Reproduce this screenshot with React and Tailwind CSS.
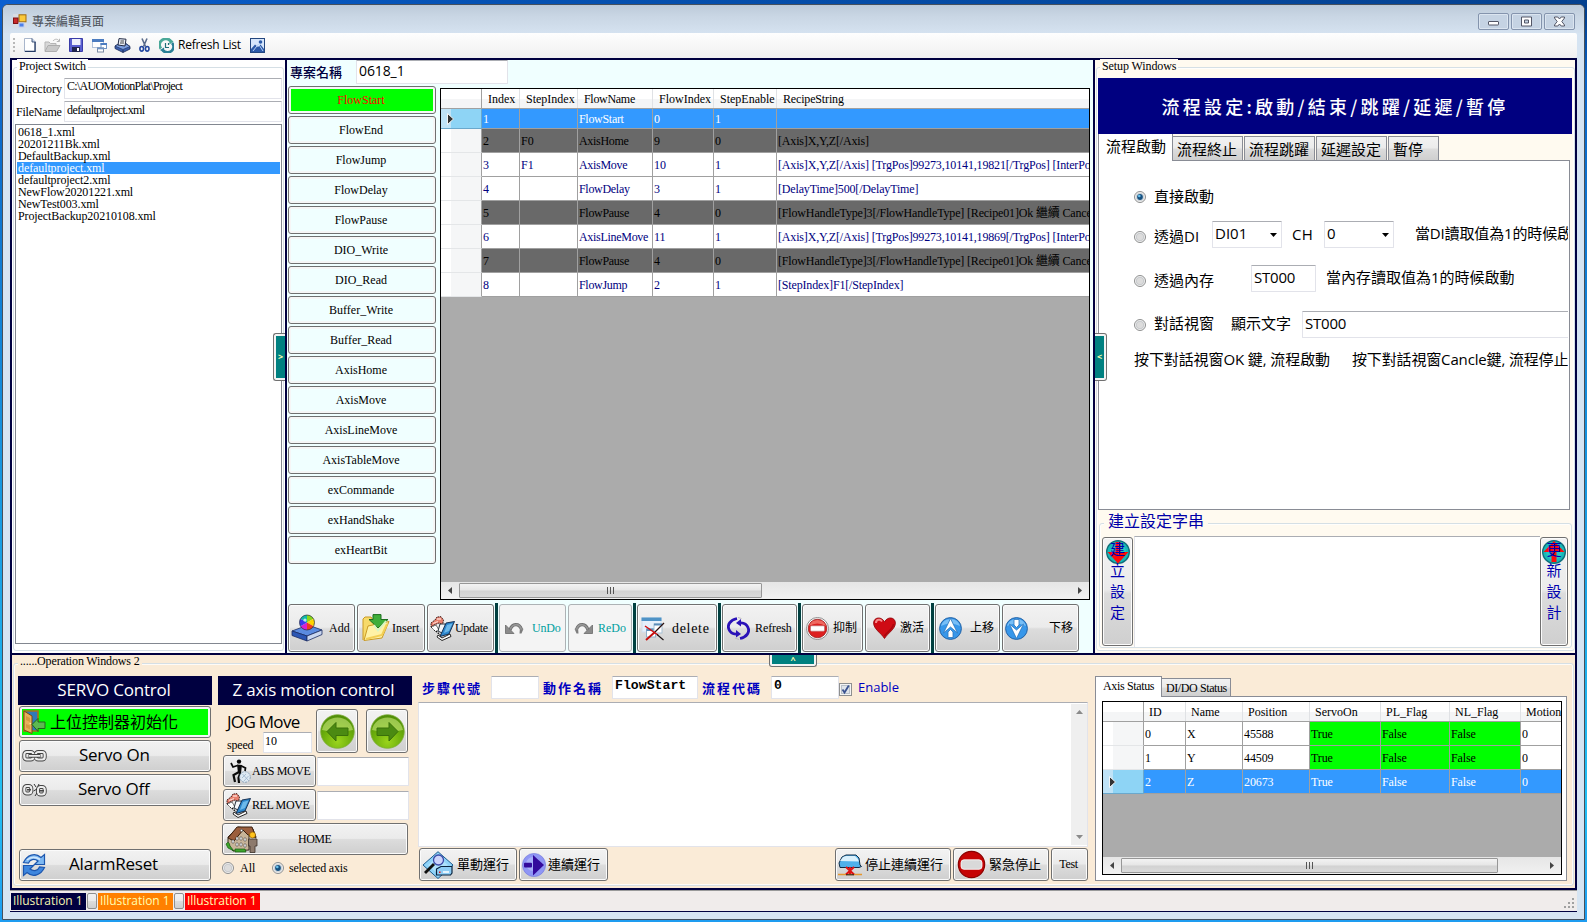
import React from "react";

const SERIF = "font-['Liberation_Serif','Noto_Sans_CJK_TC',serif]";
const SANS = "font-['Open_Sans','Noto_Sans_CJK_TC',sans-serif]";
const CJK = "font-['Noto_Sans_CJK_TC',sans-serif]";
const FACE =
  "bg-[linear-gradient(#f2f2f2,#ebebeb_48%,#dcdcdc_52%,#cfcfcf)] shadow-[inset_0_0_0_1px_#fbfbfb] border border-[#707070] rounded-[3px]";
const FIELD =
  "bg-white border border-[#e2e3ea] border-t-[#abadb3] rounded-[1px] box-border";

/* ---------- icons ---------- */
const Svg = ({ s = 24, w, h, vb = "0 0 24 24", className = "", children }) => (
  <svg width={w || s} height={h || s} viewBox={vb} className={"shrink-0 block " + className}>
    {children}
  </svg>
);

const AppIcon = () => (
  <Svg s={14} vb="0 0 14 14">
    <rect x="0" y="0" width="14" height="14" fill="#d8dbe2" />
    <rect x="6" y="0.8" width="7" height="7" fill="#fbc93a" stroke="#9c6a10" />
    <rect x="0.5" y="4" width="4.500" height="5.500" fill="#c8282a" stroke="#7d1213" />
    <rect x="6" y="9" width="5" height="4" fill="#4d7fe8" stroke="#bdd0f5" />
  </Svg>
);
const NewIcon = () => (
  <Svg w={12} h={14} vb="0 0 12 14">
    <path d="M.5 .5H8L11.500 4V13.500H.5Z" fill="#fff" stroke="#a9b6cb" />
    <path d="M11 4V13.500H1" fill="none" stroke="#243a63" strokeWidth="1.300" />
    <path d="M8 .5V4H11.500" fill="#c7d5ea" stroke="#243a63" strokeWidth=".8" />
  </Svg>
);
const OpenIcon = () => (
  <Svg w={17} h={15} vb="0 0 17 15">
    <path d="M1 13V4H5L6.500 5.500H12V8" fill="#d8d8d8" stroke="#b5b5b5" />
    <path d="M1 13.500L4 7.500H16L12.500 13.500Z" fill="#c9c9c9" stroke="#adadad" />
    <path d="M9 3C11 .5 14 .8 15 3M15.500 .8V3.500H12.800" fill="none" stroke="#b5b5b5" />
  </Svg>
);
const SaveIcon = () => (
  <Svg s={14} vb="0 0 14 14">
    <path d="M.5 .5H13.500V13.500H.5Z" fill="#5a5fd0" stroke="#3a3ca8" />
    <rect x="3" y="1" width="8.500" height="6" fill="#eef0fb" />
    <rect x="3" y="9" width="8" height="5" fill="#20244f" />
    <rect x="8" y="10" width="2" height="3" fill="#fff" />
  </Svg>
);
const WindowsIcon = () => (
  <Svg s={15} vb="0 0 15 15">
    <rect x=".5" y="1.500" width="11" height="8" fill="#fff" stroke="#b3c3da" />
    <rect x="0" y="1" width="12" height="3" fill="#4c7cc0" />
    <rect x="9" y="5.500" width="5.500" height="5" fill="#fff" stroke="#6f93c4" />
    <rect x="8.500" y="5" width="6.500" height="2" fill="#4c7cc0" />
    <rect x="5.500" y="10" width="6" height="4" fill="#fff" stroke="#7b8aa3" />
    <rect x="5" y="9.500" width="7" height="1.800" fill="#6f93c4" />
  </Svg>
);
const PrinterIcon = () => (
  <Svg w={17} h={15} vb="0 0 17 15">
    <path d="M1 8L5 5.500H12L16 8.500V11L9 14.500L1 10.500Z" fill="#3b5fae" stroke="#1d2b55" strokeWidth=".8" />
    <path d="M1 8L9 11.500L16 8.500L12 6H5Z" fill="#7d9fe0" stroke="#1d2b55" strokeWidth=".6" />
    <path d="M5 .6L12 1.200L11 8L4 7Z" fill="#e9edf5" stroke="#222b45" />
    <path d="M6.500 3H10M6 5H10" stroke="#333" strokeWidth=".9" />
    <path d="M9 12V14.500" stroke="#1d2b55" />
  </Svg>
);
const CutIcon = () => (
  <Svg w={11} h={14} vb="0 0 11 14">
    <path d="M3 .5L6.500 8.500M8 .5L4.500 8.500" stroke="#5b6c8c" strokeWidth="1.600" fill="none" />
    <ellipse cx="2.700" cy="10.800" rx="1.800" ry="2.300" fill="none" stroke="#2347a0" strokeWidth="1.600" />
    <ellipse cx="8.200" cy="10.800" rx="1.800" ry="2.300" fill="none" stroke="#2347a0" strokeWidth="1.600" />
  </Svg>
);
const SyncIcon = () => (
  <Svg s={15} vb="0 0 15 15">
    <path d="M2 10.500A6 5.600 0 0 1 11.500 3" fill="none" stroke="#4aa898" strokeWidth="2.800" />
    <path d="M13 5A6 5.600 0 0 1 4 12.500" fill="none" stroke="#2a7f96" strokeWidth="2.600" />
    <path d="M10 0L14.500 3.500L10.500 6.500Z" fill="#4aa898" />
    <path d="M5.500 15L1 12L5 9.500Z" fill="#2a7f96" />
    <path d="M6.500 5V9.500H10M9.500 5V7" fill="none" stroke="#1f6f78" strokeWidth="1.200" />
  </Svg>
);
const PhotoIcon = () => (
  <Svg s={15} vb="0 0 15 15">
    <rect x=".5" y=".5" width="14" height="14" fill="#d6e6fb" stroke="#24477f" />
    <path d="M1 11L5 6.500L8 9L10.500 6.500L14 11V14H1Z" fill="#2c5aa8" />
    <path d="M3 13L8.500 6L13 13" fill="none" stroke="#b8d2f5" />
    <circle cx="10.500" cy="4" r="1.800" fill="#2c5aa8" />
  </Svg>
);
const AddIcon = () => (
  <Svg w={32} h={28} vb="0 0 32 28">
    <path d="M1 17L17 11L31 16L16 22Z" fill="#5b8be0" stroke="#1a2c63" strokeWidth=".8" />
    <path d="M1 17L16 22V27L1 21.500Z" fill="#2b56b4" stroke="#1a2c63" strokeWidth=".8" />
    <path d="M16 22L31 16V20.500L16 27Z" fill="#c9d6ef" stroke="#1a2c63" strokeWidth=".8" />
    <path d="M16 8.500V1A7.500 7.500 0 0 1 22.500 4.800Z" fill="#8ad61a" />
    <path d="M16 8.500L22.500 4.800A7.500 7.500 0 0 1 22.500 12.200Z" fill="#ffd400" />
    <path d="M16 8.500L22.500 12.200A7.500 7.500 0 0 1 16 16Z" fill="#f03a1e" />
    <path d="M16 8.500V16A7.500 7.500 0 0 1 9.500 12.200Z" fill="#d81fd0" />
    <path d="M16 8.500L9.500 12.200A7.500 7.500 0 0 1 9.500 4.800Z" fill="#3a3aee" />
    <path d="M16 8.500L9.500 4.800A7.500 7.500 0 0 1 16 1Z" fill="#12b8a8" />
    <circle cx="16" cy="8.500" r="7.500" fill="none" stroke="#26303f" strokeWidth=".7" />
    <circle cx="14" cy="6" r="1.600" fill="#fff" opacity=".7" />
  </Svg>
);
const InsertIcon = () => (
  <Svg w={28} h={28} vb="0 0 28 28">
    <path d="M1 26V5L3 3H9L11 6H23V12" fill="#f7da6a" stroke="#c99a25" />
    <path d="M2 26.500L6 12L27 7.500L20 24Z" fill="#fff2a6" stroke="#c99a25" />
    <path d="M4 25L20 21L25 10" fill="none" stroke="#f3cf55" strokeWidth="2" />
    <path d="M11 .6H19V5.500H26L16 14L7 5.500H11Z" fill="#3fae3a" stroke="#1c6e1e" />
    <path d="M12 11L16 16.500L24 7" fill="none" stroke="#d5f5c5" strokeWidth="1.800" />
  </Svg>
);
const BooksIcon = ({ s = 25 }) => (
  <Svg s={s} vb="0 0 25 25">
    <path d="M1 7L5 4L7 1L11 .7L13.500 4L12.500 9L9 7L4 9L1 11Z" fill="#e8806e" stroke="#30110e" strokeWidth=".9" strokeDasharray="1.600 .7" />
    <path d="M3 7.500L8 5.500M7 3L11 3" stroke="#fbd4cc" strokeWidth="1.300" />
    <path d="M1 11L6 9L9 14L6 16Z" fill="#fff" stroke="#111" strokeWidth=".9" strokeDasharray="1.500 .8" />
    <path d="M10 8L15 8L17 11L12 17L8 15Z" fill="#f4f6f8" stroke="#15202b" strokeWidth=".9" />
    <path d="M16 7L24.500 5.500L19 18L10 20.500Z" fill="#2c86cc" stroke="#0c2344" strokeWidth=".9" />
    <path d="M17 9L22.500 7.500L19 15L14 17Z" fill="#6db9ea" />
    <path d="M8 19L12 22L20 18L21 20.500L12 24.500L7 21Z" fill="#fff" stroke="#111" strokeWidth=".9" />
    <path d="M6 15L10 19" stroke="#111" strokeWidth="1.300" strokeDasharray="1.500 1" />
  </Svg>
);
const UndoIcon = ({ flip }) => (
  <Svg w={19} h={13} vb="0 0 19 13">
    <g transform={flip ? "translate(19 0) scale(-1 1)" : undefined}>
      <path d="M5 8C7 1.500 14 .5 16.500 7.500" fill="none" stroke="#6f6f6f" strokeWidth="3.200" />
      <path d="M5 8C7 1.500 14 .5 16.500 7.500" fill="none" stroke="#979797" strokeWidth="1.600" />
      <path d="M.5 3V11.500H9Z" fill="#8b8b8b" stroke="#6a6a6a" strokeWidth=".8" />
      <path d="M14.800 8L18.500 6.800L16.500 11.500H14.500Z" fill="#7d7d7d" />
    </g>
  </Svg>
);
const DeleteIcon = () => (
  <Svg w={24} h={25} vb="0 0 24 25">
    <rect x="1" y="2" width="19" height="14" fill="#e6f0fb" stroke="#cfdeee" />
    <rect x=".5" y="1.500" width="20" height="3.500" fill="#4f93c6" />
    <rect x="5.500" y="13" width="9" height="8" fill="#fff" stroke="#8fb0cc" />
    <rect x="5.500" y="12.500" width="9" height="2.500" fill="#5b8db9" />
    <rect x="13" y="8" width="8" height="9" fill="#fff" stroke="#a6bfd4" />
    <path d="M13 8.500H21" stroke="#5b8db9" strokeWidth="2" />
    <path d="M4 10L17 19" stroke="#d40f0f" strokeWidth="1.500" />
    <path d="M23 7L14 16" stroke="#2a1010" strokeWidth="1.200" />
    <path d="M14 16L5 24" stroke="#c60d0d" strokeWidth="1.900" />
    <path d="M16 18.500L22.500 24" stroke="#1a1010" strokeWidth="1.100" />
  </Svg>
);
const CycleIcon = () => (
  <Svg w={23} h={23} vb="0 0 23 23">
    <path d="M10 1.500C3 3 0 8 2 12.500C3 15 5.500 17 9 17.200" fill="none" stroke="#2a12b8" strokeWidth="2.800" />
    <path d="M13 21.500C20 20 23 15 21 10.500C20 8 17.500 6 14 5.800" fill="none" stroke="#2a12b8" strokeWidth="2.800" />
    <path d="M9 13V20.500L14 17Z" fill="#2a12b8" />
    <path d="M14 2V9.500L9 6Z" fill="#2a12b8" />
    <path d="M12 22.500L8 21M11 .5L14.500 1.500" stroke="#bcbcbc" />
  </Svg>
);
const StopIcon = () => (
  <Svg s={23} vb="0 0 23 23">
    <circle cx="11.500" cy="11.500" r="11" fill="#fff" stroke="#8c8c8c" />
    <circle cx="11.500" cy="11.500" r="9.300" fill="#dd1f1f" stroke="#8b0f0f" strokeWidth=".7" />
    <path d="M3 9A9 9 0 0 1 20 9Q11 4 3 9Z" fill="#f27c70" opacity=".8" />
    <rect x="4.500" y="8.800" width="14" height="5.400" rx="1" fill="#fff" stroke="#b56a6a" strokeWidth=".6" />
  </Svg>
);
const HeartIcon = () => (
  <Svg w={23} h={22} vb="0 0 23 22">
    <path d="M11.500 21.500C8 16 .6 12 .6 6C.6 .2 8.500 -1.200 11.500 5C14.500 -1.200 22.400 .2 22.400 6C22.400 12 15 16 11.500 21.500Z" fill="#cf0b14" stroke="#8d0408" strokeWidth=".8" />
    <path d="M3 6C3 2.500 7 1.500 9 4.500" fill="none" stroke="#f58b8b" strokeWidth="2" />
    <path d="M20.500 7C20 12 14 15 11.500 19" fill="none" stroke="#8d0408" strokeWidth="1.500" opacity=".6" />
  </Svg>
);
const MoveIcon = ({ down }) => (
  <Svg s={23} vb="0 0 23 23">
    <circle cx="11.500" cy="11.500" r="10.900" fill="#3797ea" stroke="#2563a5" />
    <path d="M2 9A10 10 0 0 1 21 9Q11 4 2 9Z" fill="#8ecbfa" opacity=".75" />
    {down ? (
      <>
        <path d="M4.500 7L11.500 13L18.500 7L11.500 21.500Z" fill="#fff" stroke="#2a75bd" strokeWidth=".8" />
        <path d="M9 2.500H14V8L11.500 10.500L9 8Z" fill="#fff" stroke="#2a75bd" strokeWidth=".8" />
      </>
    ) : (
      <>
        <path d="M11.500 1.500L18.500 16L11.500 10L4.500 16Z" fill="#fff" stroke="#2a75bd" strokeWidth=".8" />
        <path d="M9 20.500V15L11.500 12.500L14 15V20.500Z" fill="#fff" stroke="#2a75bd" strokeWidth=".8" />
      </>
    )}
  </Svg>
);
const GlobeIcon = ({ up }) => (
  <Svg s={24}>
    <circle cx="12" cy="12" r="11.300" fill="#18b8b8" stroke="#11707a" strokeWidth="1.400" />
    <circle cx="12" cy="12" r="8" fill="#35d2cc" opacity=".55" />
    {up ? (
      <path d="M12 1L22.500 12H14.500V22H9.500V12H1.500Z" fill="#ff0a0a" />
    ) : (
      <path d="M9.500 2H14.500V12H22.500L12 23.500L1.500 12H9.500Z" fill="#ff0a0a" />
    )}
  </Svg>
);
const DoorIcon = () => (
  <Svg w={24} h={24}>
    <path d="M2 1H16V21H2Z" fill="#2f7ab8" stroke="#a8701c" strokeWidth="1.600" />
    <path d="M2 1L10 6V23.500L2 20Z" fill="#e8b05a" stroke="#7a4a10" />
    <path d="M4 6L8 8V12L4 10ZM4 14L8 15.500V19.500L4 17.500Z" fill="#d69a40" />
    <circle cx="8.300" cy="13.500" r=".8" fill="#fff3b0" />
    <path d="M10 14.500L16 8.500V12H23V18.500H16V21.500Z" fill="#5db852" stroke="#1f6a1c" />
  </Svg>
);
const ChainIcon = ({ broken }) => (
  <Svg w={25} h={14} vb="0 0 25 14">
    <g fill="none">
      <g stroke="#444" strokeWidth="4">
        <rect x="2.300" y="3" width={broken ? 7 : 9} height="7.500" rx="2.500" />
        <rect x={broken ? 16 : 13.700} y={broken ? 4 : 3} width={broken ? 6.700 : 9} height="7.500" rx="2.500" />
      </g>
      <g stroke="#ededed" strokeWidth="2.200">
        <rect x="2.300" y="3" width={broken ? 7 : 9} height="7.500" rx="2.500" />
        <rect x={broken ? 16 : 13.700} y={broken ? 4 : 3} width={broken ? 6.700 : 9} height="7.500" rx="2.500" />
      </g>
      {broken ? (
        <path d="M12 1L14 4M11.500 8L15 6M13 13L15 10M17 1L16 3" stroke="#333" />
      ) : (
        <path d="M6.500 6.800H18.500" stroke="#444" strokeWidth="3.800" />
      )}
      {broken ? (
        <path d="M5 6.800H9M17 7.800H22" stroke="#444" strokeWidth="1.600" />
      ) : (
        <path d="M7 6.800H18" stroke="#eee" strokeWidth="1.800" />
      )}
    </g>
  </Svg>
);
const RecycleIcon = () => (
  <Svg w={24} h={24}>
    <path d="M1.500 9.500C5 2 13 -1 19 4.500L22.500 1.500V11.500H12.500L16 8C12 5 8 6.500 6.500 10Z" fill="#7db8f2" stroke="#1c56ae" strokeWidth="1.200" />
    <path d="M22.500 14.500C19 22 11 25 5 19.500L1.500 22.500V12.500H11.500L8 16C12 19 16 17.500 17.500 14Z" fill="#3e86de" stroke="#1c56ae" strokeWidth="1.200" />
    <path d="M5 7Q11 2 18 6.500" fill="none" stroke="#cfe6fc" strokeWidth="1.500" />
  </Svg>
);
const ArrowBall = ({ right }) => (
  <Svg s={35} vb="0 0 35 35">
    <defs>
      <radialGradient id={right ? "gr" : "gl"} cx=".5" cy=".8" r=".8">
        <stop offset="0" stopColor="#9ad41c" />
        <stop offset=".55" stopColor="#6cae0c" />
        <stop offset="1" stopColor="#4d8a08" />
      </radialGradient>
    </defs>
    <circle cx="17.500" cy="17.500" r="16.800" fill={right ? "url(#gr)" : "url(#gl)"} stroke="#7fae3a" strokeWidth=".8" />
    <path d="M2 16A15.700 15 0 0 1 33 16Q17 20 2 16Z" fill="#c6e67c" opacity=".6" />
    <g transform={right ? "translate(35 0) scale(-1 1)" : undefined}>
      <path d="M7 17.500L16 8.500V14H28V21.500H16V27Z" fill="#4b8a12" stroke="#3a700a" />
    </g>
  </Svg>
);
const RunnerIcon = () => (
  <Svg w={21} h={25} vb="0 0 21 25">
    <circle cx="9" cy="2.600" r="2.200" fill="#0a0a0a" />
    <path d="M7 5.500L12 6L11 14L8 14Z" fill="#0a0a0a" />
    <path d="M7.500 6.500L3 8L1 4M11.500 7L15.500 9L15 12" fill="none" stroke="#0a0a0a" strokeWidth="1.700" />
    <path d="M9 13L3.500 16L5 23M10.500 13.500L8.500 19L9 24" fill="none" stroke="#0a0a0a" strokeWidth="2.200" />
    <circle cx="15" cy="18" r="5.300" fill="#dfeaf3" stroke="#8aa3bb" strokeDasharray="2 1" />
    <path d="M12.500 15L18 21M12 19L16 15M14 22L18.500 17" stroke="#9bb4cc" strokeWidth=".8" />
  </Svg>
);
const HouseIcon = () => (
  <Svg w={33} h={27} vb="0 0 33 27">
    <path d="M3 11L13 1L28 3L31 12L24 10V24L8 25L3 18Z" fill="#c7b499" stroke="#3b2a1c" />
    <path d="M3 12L12 1H27L31 11L23 9L18 4L9 15Z" fill="#9b5e3c" stroke="#3a2010" />
    <path d="M16 3l2 1-1 2-2-1z" fill="#fff" stroke="#222" strokeWidth=".5" />
    <path d="M7 14h2v3H7zM11 11h2v3h-2zM15 11h2v3h-2zM19 12h2v3h-2zM11 17h2v3h-2zM15 17h2v3h-2zM19 18h2v3h-2z" fill="#fff" stroke="#333" strokeWidth=".5" />
    <path d="M1 18Q4 14 5 20L9 25L3 22ZM10 23L20 23L21 26H10Z" fill="#3da32b" stroke="#14590e" strokeWidth=".7" />
    <circle cx="27.500" cy="9" r="3" fill="#ffc21c" stroke="#8f5e00" strokeWidth=".7" />
    <path d="M23.500 13H32V20H30V26.500H25V20H23.500Z" fill="#8d7a6c" stroke="#3c312a" strokeWidth=".8" />
  </Svg>
);
const SearchDiskIcon = () => (
  <Svg w={32} h={28} vb="0 0 32 28">
    <path d="M1 14L16 .7L31 14L16 27.500Z" fill="#8fd3f8" stroke="#1b5b8e" />
    <path d="M6 14L16 5L26 14L16 23Z" fill="#c3ebfd" opacity=".6" />
    <path d="M3 22L12 13" stroke="#111" strokeWidth="2.800" />
    <circle cx="16.500" cy="9" r="5" fill="#cdd4fa" stroke="#3a4aa8" strokeWidth="1.300" />
    <path d="M14.500 18L19 15.500H30V22L28.500 24H14.500Z" fill="#8ecdf5" stroke="#0a2540" strokeWidth="1.200" />
    <rect x="17" y="20.500" width="1.500" height="1.500" fill="#e11" />
    <path d="M21 21H27" stroke="#fff" strokeWidth="1.500" />
  </Svg>
);
const PlayBallIcon = () => (
  <Svg s={24}>
    <circle cx="12" cy="12" r="11.600" fill="#8f96f5" stroke="#7479d8" strokeWidth=".6" />
    <circle cx="11" cy="11" r="7" fill="#b9c3fb" opacity=".6" />
    <path d="M11 2L22 12L11 22.500Z" fill="#330a9c" />
    <rect x="2" y="9.800" width="8" height="4.600" rx="1" fill="#330a9c" />
  </Svg>
);
const TrainIcon = () => (
  <Svg w={24} h={22} vb="0 0 24 22">
    <path d="M1 9L4 3L8 1H18L21 4L22 11L23.500 12.500L21 13.500H2Z" fill="#4fb0ea" stroke="#102b45" />
    <path d="M2 7L5 3L8 2H17L20 5L21 7.500Z" fill="#d9f0fc" />
    <path d="M0 20.500H24" stroke="#e6972e" strokeWidth="1.600" />
    <path d="M8 13L16 20.500M16 13L8 20.500M12 13V20" stroke="#e01313" strokeWidth="2" />
    <path d="M8 20.800H16" stroke="#222" strokeWidth="1" />
  </Svg>
);
const EStopIcon = () => (
  <Svg s={29} vb="0 0 29 29">
    <path d="M9.500 .7H19.500L28.300 9.500V19.500L19.500 28.300H9.500L.7 19.500V9.500Z" fill="#fbf6e6" />
    <circle cx="14.500" cy="14.500" r="13.200" fill="#c60404" stroke="#8a0202" strokeWidth="1.200" />
    <rect x="4" y="9.800" width="21" height="9.500" rx="3" fill="#d9d9d9" stroke="#fff" strokeWidth=".8" />
  </Svg>
);

/* ---------- controls ---------- */
const Radio = ({ on, className = "" }) => (
  <Svg s={12} vb="0 0 12 12" className={className}>
    <circle cx="6" cy="6" r="5.500" fill="#f4f4f4" stroke="#8e8f8f" />
    <circle cx="6" cy="6" r="3.800" fill={on ? "#e8f3fa" : "#dcdcdc"} stroke="#b9bdc1" strokeWidth=".7" />
    {on && <circle cx="6" cy="6" r="2.900" fill="#16507f" />}
    {on && <circle cx="5.300" cy="5" r="1.300" fill="#6cc3ee" />}
  </Svg>
);
const Btn = ({ className = "", children }) => (
  <button className={"flex shrink-0 items-center overflow-hidden whitespace-nowrap " + FACE + " " + className}>{children}</button>
);
const Field = ({ className = "", children }) => (
  <div className={"flex shrink-0 overflow-hidden whitespace-nowrap " + FIELD + " " + className}>{children}</div>
);
const Combo = ({ children }) => (
  <Field className="h-[27px] w-[70px] items-center justify-between pr-1 pb-[3px] pl-[2px] text-[15px]">
    <span>{children}</span>
    <Svg w={7} h={4} vb="0 0 7 4" className="mt-1">
      <path d="M0 0H7L3.500 4Z" fill="#000" />
    </Svg>
  </Field>
);
const HScroll = ({ thumb, className }) => (
  <div className={"flex h-[17px] shrink-0 items-center bg-[linear-gradient(#e6e6e6,#f1f1f1)] " + className}>
    <div className="flex w-[18px] shrink-0 justify-center pr-px">
      <Svg w={4} h={7} vb="0 0 4 7"><path d="M4 0V7L0 3.500Z" fill="#444" /></Svg>
    </div>
    <div className={"flex h-[15px] shrink-0 items-center justify-center gap-[2px] rounded-[1px] border border-[#979797] bg-[linear-gradient(#f3f3f3,#e6e6e6_48%,#d2d2d2_52%,#dadada)] " + thumb}>
      <i className="h-[7px] w-px bg-[#555]" />
      <i className="h-[7px] w-px bg-[#555]" />
      <i className="h-[7px] w-px bg-[#555]" />
    </div>
    <div className="grow" />
    <div className="flex w-[18px] shrink-0 justify-center">
      <Svg w={4} h={7} vb="0 0 4 7"><path d="M0 0V7L4 3.500Z" fill="#444" /></Svg>
    </div>
  </div>
);
const Group = ({ title, titleClass, className, children }) => (
  <div className={"relative shrink-0 rounded-[3px] border border-[#d5dfe5] shadow-[inset_0_0_0_1px_rgba(255,255,255,.8)] " + className}>
    <span className={"absolute whitespace-nowrap " + titleClass}>{title}</span>
    {children}
  </div>
);
const Sep = () => <div className="mx-px h-[50px] w-[3px] shrink-0 bg-[#004040]" />;
const Pointer = () => (
  <Svg w={7} h={12} vb="0 0 7 12"><path d="M.5 .5V11.500L6.500 6Z" fill="#333" stroke="#fff" strokeWidth=".9" /></Svg>
);

/* ---------- data ---------- */
const files = ["0618_1.xml", "20201211Bk.xml", "DefaultBackup.xml", "defaultproject.xml", "defaultproject2.xml", "NewFlow20201221.xml", "NewTest003.xml", "ProjectBackup20210108.xml"];
const flows = ["FlowStart", "FlowEnd", "FlowJump", "FlowDelay", "FlowPause", "DIO_Write", "DIO_Read", "Buffer_Write", "Buffer_Read", "AxisHome", "AxisMove", "AxisLineMove", "AxisTableMove", "exCommande", "exHandShake", "exHeartBit"];
const stepCols = ["w-[38px]", "w-[58px]", "w-[75px] tracking-[-0.3px]", "w-[61px]", "w-[63px]", "w-[600px] tracking-[-0.16px]"];
const stepHead = ["Index", "StepIndex", "FlowName", "FlowIndex", "StepEnable", "RecipeString"];
const pause = "[FlowHandleType]3[/FlowHandleType] [Recipe01]Ok 繼續 Cancel 停止";
const steps = [
  ["sel", "1", "", "FlowStart", "0", "1", ""],
  ["off", "2", "F0", "AxisHome", "9", "0", "[Axis]X,Y,Z[/Axis]"],
  ["on", "3", "F1", "AxisMove", "10", "1", "[Axis]X,Y,Z[/Axis] [TrgPos]99273,10141,19821[/TrgPos] [InterPos]"],
  ["on", "4", "", "FlowDelay", "3", "1", "[DelayTime]500[/DelayTime]"],
  ["off", "5", "", "FlowPause", "4", "0", pause],
  ["on", "6", "", "AxisLineMove", "11", "1", "[Axis]X,Y,Z[/Axis] [TrgPos]99273,10141,19869[/TrgPos] [InterPos]"],
  ["off", "7", "", "FlowPause", "4", "0", pause],
  ["on", "8", "", "FlowJump", "2", "1", "[StepIndex]F1[/StepIndex]"],
];
const rowTone = {
  sel: "h-[20px] bg-[#3399ff] text-white",
  off: "h-[24px] bg-[#696969] text-black",
  on: "h-[24px] bg-white text-[#000080]",
};
const axisCols = ["w-[42px]", "w-[57px]", "w-[67px]", "w-[71px]", "w-[69px]", "w-[71px]", "w-[60px]"];
const axisHead = ["ID", "Name", "Position", "ServoOn", "PL_Flag", "NL_Flag", "Motion"];
const axes = [
  ["0", "X", "45588", "True", "False", "False", "0"],
  ["1", "Y", "44509", "True", "False", "False", "0"],
  ["2", "Z", "20673", "True", "False", "False", "0"],
];

/* ---------- panels ---------- */
const TitleBar = () => (
  <div className="flex h-[28px] shrink-0 items-start bg-[linear-gradient(#bccad9,#c9d6e4_40%,#d5e2f0)] pl-[10px]">
    <div className="mt-[9px]"><AppIcon /></div>
    <span className={"mt-[7px] ml-[5px] text-[12px] leading-[18px] text-[#4a4f57] " + CJK}>專案編輯頁面</span>
    <div className="grow" />
    <div className="mt-[8px] mr-[9px] flex gap-[2px]">
      {[0, 1, 2].map((i) => (
        <div key={i} className="flex h-[17px] w-[31px] items-center justify-center rounded-[2px] border border-[#8494ad] bg-[#c5d3e3] shadow-[inset_0_0_0_1px_#dbe5f0]">
          <Svg w={13} h={11} vb="0 0 13 11">
            {i === 0 && <rect x="1.500" y="5.500" width="10" height="3.500" rx=".5" fill="#fff" stroke="#535666" />}
            {i === 1 && <path d="M1.500 1H11.500V10H1.500ZM4.500 4H8.500V7H4.500Z" fill="#fff" fillRule="evenodd" stroke="#535666" />}
            {i === 2 && <path d="M1.500 1H4.800L6.500 3L8.200 1H11.500V2L8.800 5.500L11.500 9V10H8.200L6.500 8L4.800 10H1.500V9L4.200 5.500L1.500 2Z" fill="#fff" stroke="#535666" />}
          </Svg>
        </div>
      ))}
    </div>
  </div>
);

const ToolStrip = () => (
  <div className="flex h-[25px] shrink-0 items-center rounded-[2px] bg-[linear-gradient(#fefefe,#f0f0f0)] pb-px pl-[3px]">
    <div className="flex flex-col gap-[2px]">
      {[0, 1, 2, 3].map((i) => <i key={i} className="h-[2px] w-[2px] bg-[#b8b8b8]" />)}
    </div>
    <div className="ml-[9px]"><NewIcon /></div>
    <div className="ml-[8px]"><OpenIcon /></div>
    <div className="ml-[8px]"><SaveIcon /></div>
    <div className="ml-[9px]"><WindowsIcon /></div>
    <div className="ml-[7px]"><PrinterIcon /></div>
    <div className="ml-[8px]"><CutIcon /></div>
    <div className="ml-[9px]"><SyncIcon /></div>
    <span className={"ml-[4px] w-[74px] text-[12px] tracking-[-0.2px] whitespace-nowrap " + SANS}>Refresh List</span>
    <div className="-ml-[2px]"><PhotoIcon /></div>
  </div>
);

const ProjectPanel = () => (
  <div className={"w-[273px] shrink-0 bg-white text-[12px] " + SERIF}>
    <Group title="Project Switch" titleClass="left-[3px] top-[-9px] bg-white px-[2px] leading-[14px] tracking-[-0.25px]" className="mt-[7px] ml-px h-[584px] w-[271px]">
      <div className="mt-[10px] flex h-[21px] items-center">
        <span className="w-[50px] pl-[2px]">Directory</span>
        <Field className="h-[21px] w-[218px] pl-[2px] leading-[15px] tracking-[-0.7px]">C:\AUOMotionPlat\Project</Field>
      </div>
      <div className="mt-[2px] flex h-[21px] items-center">
        <span className="w-[50px] pl-[2px] tracking-[-0.2px]">FileName</span>
        <Field className="h-[21px] w-[218px] pl-[2px] leading-[16px] tracking-[-0.6px]">defaultproject.xml</Field>
      </div>
      <div className="mt-[2px] ml-px h-[520px] w-[267px] border border-[#828790] bg-white p-px">
        {files.map((f, i) => (
          <div key={f} className={"h-[12px] pl-px leading-[12px] tracking-[-0.1px] " + (i === 3 ? "bg-[#3399ff] text-white" : "text-black")}>{f}</div>
        ))}
      </div>
    </Group>
  </div>
);

const StepGrid = () => (
  <div className="mt-[2px] ml-[4px] flex h-[512px] w-[650px] flex-col overflow-hidden border border-black bg-[#ababab] text-[12px]">
    <div className="flex h-[20px] shrink-0 border-b border-[#a0a0a0] bg-[linear-gradient(#fff_50%,#f4f5f6_52%)]">
      <div className="w-[41px] shrink-0 border-r border-[#a0a0a0]" />
      {stepHead.map((h, i) => (
        <div key={h} className={"shrink-0 border-r border-[#e0e2e5] pl-[6px] leading-[20px] whitespace-nowrap " + stepCols[i]}>{h}</div>
      ))}
    </div>
    {steps.map(([tone, ...cells], r) => (
      <div key={r} className={"flex shrink-0 " + rowTone[tone]}>
        <div className={"flex w-[41px] shrink-0 items-center border-r border-b pl-[6px] " + (r === 0 ? "border-[#6aa8cc] bg-[linear-gradient(90deg,#bfe3f7_25%,#8ed4f5_25%)]" : "border-[#a0a0a0] border-b-[#e4e6e8] bg-[linear-gradient(90deg,#fff_25%,#f5f6f7_25%)]")}>
          {r === 0 && <Pointer />}
        </div>
        {cells.map((c, i) => (
          <div key={i} className={"flex shrink-0 items-center border-r border-b border-[#a0a0a0] pl-px whitespace-nowrap " + stepCols[i]}>{c}</div>
        ))}
      </div>
    ))}
    <div className="grow" />
    <HScroll className="w-[648px]" thumb="w-[303px]" />
  </div>
);

const FlowPanel = () => (
  <div className={"w-[808px] shrink-0 border-l-2 border-[#000040] bg-[#f0ffff] " + SERIF}>
    <div className="flex h-[24px]">
      <span className={"w-[69px] pt-[2px] pl-[3px] text-[13px] font-medium text-[#000040] " + CJK}>專案名稱</span>
      <Field className={"h-[24px] w-[152px] pl-[2px] text-[14px] leading-[20px] tracking-[-0.1px] " + SANS}>0618_1</Field>
    </div>
    <div className="mt-[2px] flex h-[517px] pl-px">
      <div className="flex w-[148px] shrink-0 flex-col gap-[2px]">
        {flows.map((f, i) => (
          <button key={f} className="h-[28px] w-[148px] rounded-[3px] border border-[#707070] bg-[#f6f6f6] p-[2px]">
            <div className={"flex h-[22px] items-center justify-center pr-[2px] text-[12px] " + (i === 0 ? "bg-[#00ff00] text-[#ff0000]" : "bg-[#f0ffff] text-black")}>{f}</div>
          </button>
        ))}
      </div>
      <StepGrid />
    </div>
    <div className="flex h-[50px] items-center pl-px text-[12px]">
      <Btn className="h-[48px] w-[67px] pl-[2px]"><AddIcon /><span className="ml-[6px]">Add</span></Btn>
      <Btn className="ml-[2px] h-[48px] w-[68px] pl-[4px]"><InsertIcon /><span className="ml-[2px]">Insert</span></Btn>
      <Btn className="ml-[2px] h-[48px] w-[67px] pl-[2px]"><BooksIcon /><span className="tracking-[-0.3px]">Update</span></Btn>
      <Sep />
      <button className="flex h-[48px] w-[67px] shrink-0 items-center rounded-[3px] border border-[#adb2b5] bg-[#f4f4f4] pl-[5px] text-[#009f9f]"><UndoIcon /><span className="ml-[8px] tracking-[-0.2px]">UnDo</span></button>
      <button className="ml-[2px] flex h-[48px] w-[64px] shrink-0 items-center rounded-[3px] border border-[#adb2b5] bg-[#f4f4f4] pl-[5px] text-[#009f9f]"><UndoIcon flip /><span className="ml-[5px]">ReDo</span></button>
      <Sep />
      <Btn className="h-[48px] w-[80px] pl-[3px]"><DeleteIcon /><span className="ml-[7px] text-[14px] tracking-[0.7px]">delete</span></Btn>
      <Sep />
      <Btn className="h-[48px] w-[75px] pl-[4px]"><CycleIcon /><span className="ml-[5px] tracking-[-0.1px]">Refresh</span></Btn>
      <Sep />
      <Btn className="h-[48px] w-[61px] pl-[3px]"><StopIcon /><span className="ml-[4px]">抑制</span></Btn>
      <Btn className="ml-[2px] h-[48px] w-[65px] pl-[7px]"><HeartIcon /><span className="ml-[4px]">激活</span></Btn>
      <Sep />
      <Btn className="h-[48px] w-[65px] pl-[3px]"><MoveIcon /><span className="ml-[8px]">上移</span></Btn>
      <Btn className="ml-[2px] h-[48px] w-[77px] pl-[2px]"><MoveIcon down /><span className="ml-[21px]">下移</span></Btn>
    </div>
  </div>
);

const tabs = ["流程終止", "流程跳躍", "延遲設定", "暫停"];
const SetupPanel = () => (
  <div className={"w-[482px] shrink-0 border-l-2 border-[#000040] bg-[#fffaf0] text-[15px] " + SANS}>
    <Group title="Setup Windows" titleClass={"left-[3px] top-[-9px] bg-[#fffaf0] px-[2px] text-[12px] leading-[14px] tracking-[-0.1px] " + SERIF} className="mt-[7px] ml-px h-[584px] w-[479px]">
      <div className={"mt-[10px] ml-px flex h-[56px] w-[474px] items-center justify-center bg-[#000080] text-[18px] font-medium tracking-[3.25px] whitespace-nowrap text-white " + CJK}>流程設定:啟動/結束/跳躍/延遲/暫停</div>
      <div className="relative -mb-px ml-px flex h-[27px] items-start">
        <div className="h-[27px] w-[75px] border-r border-l border-[#898c95] bg-white pl-[7px] leading-[25px]">流程啟動</div>
        {tabs.map((t, i) => (
          <div key={t} className={"mt-[2px] h-[25px] border border-[#898c95] bg-[linear-gradient(#f2f2f2,#ebebeb_48%,#dcdcdc_52%,#cfcfcf)] pl-[4px] leading-[24px] whitespace-nowrap " + (i === 3 ? "w-[51px]" : "mr-px w-[71px]") + (i === 0 ? " -ml-px" : "")}>{t}</div>
        ))}
      </div>
      <div className="ml-px h-[350px] w-[472px] border border-[#898c95] bg-white pr-px">
        <div className="h-full w-full overflow-hidden whitespace-nowrap">
          <div className="mt-[21px] flex h-[30px] items-center"><Radio on className="ml-[35px]" /><span className="mb-[2px] ml-[8px]">直接啟動</span></div>
          <div className="mt-[9px] flex h-[27px] items-center">
            <Radio className="mt-[5px] ml-[35px]" /><span className="mt-[3px] ml-[8px] w-[58px] shrink-0">透過DI</span>
            <Combo>DI01</Combo>
            <span className="mb-px ml-[10px] w-[32px] shrink-0 tracking-[0.3px]">CH</span>
            <Combo>0</Combo>
            <span className="mb-[2px] ml-[21px] tracking-[-0.15px]">當DI讀取值為1的時候啟動</span>
          </div>
          <div className="mt-[17px] flex h-[27px] items-center">
            <Radio className="mt-[5px] ml-[35px]" /><span className="mt-[3px] ml-[8px] w-[97px] shrink-0">透過內存</span>
            <Field className="h-[27px] w-[65px] pl-[2px] leading-[22px] tracking-[-0.2px]">ST000</Field>
            <span className="mb-[2px] ml-[10px]">當內存讀取值為1的時候啟動</span>
          </div>
          <div className="mt-[19px] flex h-[27px] items-center">
            <Radio className="ml-[35px]" /><span className="mb-[2px] ml-[8px] w-[77px] shrink-0">對話視窗</span>
            <span className="mb-[2px] w-[71px] shrink-0">顯示文字</span>
            <Field className="h-[27px] w-[275px] pl-[2px] leading-[22px] tracking-[-0.2px]">ST000</Field>
          </div>
          <div className="mt-[11px] flex h-[20px] items-center tracking-[-0.1px]">
            <span className="ml-[35px] w-[218px] shrink-0">按下對話視窗OK 鍵, 流程啟動</span>
            <span className="tracking-[-0.15px]">按下對話視窗Cancle鍵, 流程停止</span>
          </div>
        </div>
      </div>
      <Group title="建立設定字串" titleClass="left-[4px] top-[-14px] bg-[#fffaf0] px-[4px] text-[16px] leading-[22px] text-[#0000a8]" className="mt-[13px] ml-[2px] h-[125px] w-[473px]">
        <div className="mt-[12px] ml-[2px] flex items-center">
          <VButton chars="建立設定" className="w-[31px]" />
          <div className="ml-px h-[111px] w-[406px] border-t border-l border-[#abadb3] border-l-[#e2e3ea] bg-white" />
          <VButton chars="更新設計" up className="w-[28px]" />
        </div>
      </Group>
    </Group>
  </div>
);
function VButton({ chars, up, className }) {
  return (
    <button className={"relative flex h-[109px] shrink-0 flex-col items-center overflow-hidden text-[15px] leading-[21px] text-[#0000b0] " + FACE + " " + CJK + " " + className}>
      <div className="absolute top-[2px]"><GlobeIcon up={up} /></div>
      {chars.split("").map((c) => <span key={c} className="relative block">{c}</span>)}
    </button>
  );
}

const HEAD = "flex h-[29px] w-[194px] items-center justify-center bg-[#000040] pb-[2px] text-[17px] text-white whitespace-nowrap";
const ServoColumn = () => (
  <div className={"w-[194px] shrink-0 text-[17px] " + SANS}>
    <div className={HEAD + " pr-[2px] tracking-[-0.2px]"}>SERVO Control</div>
    <button className="mt-px ml-px flex h-[32px] w-[192px] rounded-[3px] border border-[#707070] bg-[#f6f6f6] p-[2px]">
      <div className="flex h-[26px] w-full items-center bg-[#00ff00]"><DoorIcon /><span className="mb-px ml-[4px] text-[16px] whitespace-nowrap">上位控制器初始化</span></div>
    </button>
    <Btn className="mt-[2px] ml-px h-[32px] w-[192px] pb-px pl-[2px]"><ChainIcon /><span className="mb-px ml-[32px] tracking-[-0.25px]">Servo On</span></Btn>
    <Btn className="mt-[2px] ml-px h-[32px] w-[192px] pb-px pl-[2px]"><ChainIcon broken /><span className="mb-px ml-[31px] tracking-[-0.25px]">Servo Off</span></Btn>
    <Btn className="mt-[43px] ml-px h-[32px] w-[192px] pb-px pl-[2px]"><RecycleIcon /><span className="mb-px ml-[23px] tracking-[-0.2px]">AlarmReset</span></Btn>
  </div>
);
const MotionColumn = () => (
  <div className={"ml-[6px] w-[194px] shrink-0 text-[12px] " + SERIF}>
    <div className={HEAD + " pr-[3px] tracking-[-0.25px] " + SANS}>Z axis motion control</div>
    <div className="mt-[4px] flex h-[44px]">
      <div className="ml-[9px] w-[89px]">
        <div className={"h-[23px] text-[17px] leading-[26px] tracking-[-0.7px] whitespace-nowrap " + SANS}>JOG Move</div>
        <div className="flex h-[21px] items-center">
          <span className="w-[36px] pt-[5px] tracking-[-0.2px]">speed</span>
          <Field className="h-[21px] w-[49px] pl-px leading-[16px]">10</Field>
        </div>
      </div>
      <Btn className="h-[44px] w-[42px] justify-center"><ArrowBall /></Btn>
      <Btn className="ml-[8px] h-[44px] w-[42px] justify-center"><ArrowBall right /></Btn>
    </div>
    <div className="mt-[2px] ml-[5px] flex items-center">
      <Btn className="h-[32px] w-[93px] pl-[6px]"><RunnerIcon /><span className="ml-px tracking-[-0.4px]">ABS MOVE</span></Btn>
      <Field className="ml-px h-[29px] w-[92px]" />
    </div>
    <div className="mt-[2px] ml-[5px] flex items-center">
      <Btn className="h-[32px] w-[93px] pl-[2px]"><BooksIcon /><span className="ml-px tracking-[-0.4px]">REL MOVE</span></Btn>
      <Field className="ml-px h-[29px] w-[92px]" />
    </div>
    <Btn className="mt-[2px] ml-[4px] h-[32px] w-[186px] pl-[2px]"><HouseIcon /><span className="ml-[40px] tracking-[-0.5px]">HOME</span></Btn>
    <div className="mt-[5px] ml-[4px] flex h-[16px] items-center">
      <Radio /><span className="ml-[6px] w-[32px]">All</span><Radio on /><span className="ml-[5px] tracking-[-0.2px] whitespace-nowrap">selected axis</span>
    </div>
  </div>
);

const KAI = "text-[13px] font-bold tracking-[2px] whitespace-nowrap text-[#0000c0] pt-px shrink-0 " + CJK;
const MONO = "font-['Liberation_Mono',monospace] text-[13.200px] font-bold leading-[18px] pl-[2px]";
const RunColumn = () => (
  <div className={"ml-[6px] w-[670px] shrink-0 " + SANS}>
    <div className="flex h-[23px] items-center">
      <span className={"ml-[4px] w-[69px] " + KAI}>步驟代號</span>
      <Field className="h-[23px] w-[48px]" />
      <span className={"ml-[4px] w-[69px] " + KAI}>動作名稱</span>
      <Field className={"h-[23px] w-[86px] " + MONO}>FlowStart</Field>
      <span className={"ml-[4px] w-[69px] " + KAI}>流程代碼</span>
      <Field className={"h-[23px] w-[68px] " + MONO}>0</Field>
      <Svg s={13} vb="0 0 13 13" className="mt-[3px]">
        <rect x=".5" y=".5" width="12" height="12" fill="#f4f4f4" stroke="#8e8f8f" />
        <rect x="2.500" y="2.500" width="8" height="8" fill="#dfe4ea" stroke="#b9c0c8" />
        <path d="M3.500 6.500L5.500 9.500L9.800 2.500" fill="none" stroke="#3a5290" strokeWidth="1.800" />
      </Svg>
      <span className="ml-[6px] text-[13px] text-[#0000c0]">Enable</span>
    </div>
    <div className="mt-[3px] flex h-[145px] w-[670px] justify-end border border-[#e2e3ea] border-t-[#abadb3] bg-white py-px">
      <div className="flex w-[16px] flex-col items-center justify-between bg-[#efefef] py-[6px]">
        <Svg w={7} h={4} vb="0 0 7 4"><path d="M0 4H7L3.500 0Z" fill="#8a8a8a" /></Svg>
        <Svg w={7} h={4} vb="0 0 7 4"><path d="M0 0H7L3.500 4Z" fill="#8a8a8a" /></Svg>
      </div>
    </div>
    <div className="mt-px ml-px flex h-[33px] text-[13px]">
      <Btn className="h-[33px] w-[98px] pl-[2px]"><SearchDiskIcon /><span className="ml-[3px]">單動運行</span></Btn>
      <Btn className="ml-[2px] h-[33px] w-[89px] pl-[2px]"><PlayBallIcon /><span className="ml-[2px]">連續運行</span></Btn>
      <Btn className="ml-[227px] h-[33px] w-[116px] pl-[2px]"><TrainIcon /><span className="ml-[3px]">停止連續運行</span></Btn>
      <Btn className="ml-[2px] h-[33px] w-[96px] pl-[3px]"><EStopIcon /><span className="ml-[3px]">緊急停止</span></Btn>
      <Btn className={"ml-[2px] h-[33px] w-[37px] justify-center pr-[2px] pb-[2px] text-[12px] tracking-[-0.3px] " + SERIF}>Test</Btn>
    </div>
  </div>
);

const AxisColumn = () => (
  <div className={"ml-[7px] w-[472px] shrink-0 text-[12px] " + SERIF}>
    <div className="relative -mb-px flex h-[21px] items-end">
      <div className="h-[21px] w-[67px] border border-b-0 border-[#898c95] bg-white pl-[7px] leading-[18px] tracking-[-0.35px] whitespace-nowrap">Axis Status</div>
      <div className="-ml-px h-[19px] w-[70px] border border-[#898c95] bg-[linear-gradient(#f2f2f2,#ebebeb_48%,#dcdcdc_52%,#cfcfcf)] pl-[4px] leading-[18px] tracking-[-0.4px] whitespace-nowrap">DI/DO Status</div>
    </div>
    <div className="h-[185px] w-[472px] border border-[#898c95] bg-white pt-[4px] pl-[6px]">
      <div className="flex h-[174px] w-[460px] flex-col overflow-hidden border border-black bg-[#ababab]">
        <div className="flex h-[20px] shrink-0 border-b border-[#a0a0a0] bg-[linear-gradient(#fff_50%,#f4f5f6_52%)]">
          <div className="w-[41px] shrink-0 border-r border-[#a0a0a0]" />
          {axisHead.map((h, i) => (
            <div key={h} className={"shrink-0 border-r border-[#e0e2e5] pl-[5px] leading-[20px] whitespace-nowrap " + axisCols[i]}>{h}</div>
          ))}
        </div>
        {axes.map((cells, r) => (
          <div key={r} className={"flex h-[24px] shrink-0 " + (r === 2 ? "bg-[#3399ff] text-white" : "bg-white text-black")}>
            <div className={"flex w-[41px] shrink-0 items-center border-r border-b pl-[6px] " + (r === 2 ? "border-[#6aa8cc] bg-[linear-gradient(90deg,#bfe3f7_25%,#8ed4f5_25%)]" : "border-[#a0a0a0] border-b-[#e4e6e8] bg-[linear-gradient(90deg,#fff_25%,#f5f6f7_25%)]")}>
              {r === 2 && <Pointer />}
            </div>
            {cells.map((c, i) => (
              <div key={i} className={"flex shrink-0 items-center border-r border-b border-[#a0a0a0] pl-px tracking-[-0.1px] " + axisCols[i] + (r < 2 && i > 2 && i < 6 ? " bg-[#00ff00]" : "")}>{c}</div>
            ))}
          </div>
        ))}
        <div className="grow" />
        <HScroll className="w-[458px]" thumb="w-[377px]" />
      </div>
    </div>
  </div>
);

const StatusBar = () => (
  <div className={"flex h-[22px] shrink-0 items-start border-t border-b border-[#9a9a9a] border-b-[#000040] bg-[#f0eceb] pt-[2px] pl-px text-[13px] " + SANS}>
    {["bg-[#000040] text-[#f5f5b0]", "bg-[#ff8000] text-[#ffffb0]", "bg-[#ff0000] text-[#ffffb0]"].map((c, i) => (
      <React.Fragment key={c}>
        {i > 0 && <div className="mx-px h-[16px] w-[10px] rounded-[2px] border border-[#8f8f8f] bg-[linear-gradient(#f2f2f2,#ebebeb_48%,#dcdcdc_52%,#cfcfcf)]" />}
        <div className={"h-[17px] w-[75px] pl-[2px] text-[12px] leading-[16px] tracking-[-0.05px] whitespace-nowrap " + c}>Illustration 1</div>
      </React.Fragment>
    ))}
    <div className="grow" />
    <Svg s={11} vb="0 0 11 11" className="mt-[5px] mr-[2px]">
      <path d="M8 0h2v2H8zM4 4h2v2H4zM8 4h2v2H8zM0 8h2v2H0zM4 8h2v2H4zM8 8h2v2H8z" fill="#a0a0a0" />
    </Svg>
  </div>
);

export default function App() {
  return (
    <div className="h-[922px] w-[1587px] overflow-hidden bg-[linear-gradient(90deg,#0a5fd0,#0552b4_30%,#04418f)] leading-normal">
      <div className="h-full w-full bg-[linear-gradient(transparent_0,transparent_15px,#0a64c8_80px,#22c0f4_800px,#1e9cf0)] pt-[4px] pl-[2px]">
        <div className="flex h-[916px] w-[1583px] flex-col overflow-hidden rounded-t-[6px] border border-[#46505c] bg-[#d6e4f2]">
          <TitleBar />
          <div className="ml-[7px] flex w-[1567px] flex-col">
            <ToolStrip />
            <div className="relative h-[832px] shrink-0 border-2 border-[#000040]">
              <div className="flex h-[593px]">
                <ProjectPanel />
                <FlowPanel />
                <SetupPanel />
              </div>
              <div className="h-[235px] overflow-hidden border-t-2 border-[#000040] bg-[#faebd7]">
                <Group title="......Operation Windows 2" titleClass={"left-[4px] top-[-10px] bg-[#faebd7] px-[2px] text-[12px] leading-[14px] tracking-[-0.15px] " + SERIF} className="mt-[8px] ml-px h-[223px] w-[1561px]">
                  <div className="flex pt-[12px] pl-[4px]">
                    <ServoColumn />
                    <MotionColumn />
                    <RunColumn />
                    <AxisColumn />
                  </div>
                </Group>
              </div>
              <div className="absolute top-[273px] left-[261px] flex h-[48px] w-[12px] rounded-l-[3px] border border-r-0 border-[#707070] bg-[#f4f4f4] py-[2px] pl-[2px]">
                <div className="flex w-full items-center justify-center bg-[#008080] text-[9px] font-bold text-[#ffffb0]">&gt;</div>
              </div>
              <div className="absolute top-[273px] left-[1083px] flex h-[48px] w-[12px] rounded-r-[3px] border border-l-0 border-[#707070] bg-[#f4f4f4] py-[2px] pr-[2px]">
                <div className="flex w-full items-center justify-center bg-[#008080] text-[9px] font-bold text-[#ffffb0]">&lt;</div>
              </div>
              <div className="absolute top-[595px] left-[757px] flex h-[12px] w-[48px] rounded-b-[3px] border border-t-0 border-[#707070] bg-[#f4f4f4] px-[2px] pb-[2px]">
                <div className="flex w-full items-start justify-center overflow-hidden bg-[#008080] text-[9px] leading-[9px] font-bold text-[#ffffb0]">^</div>
              </div>
            </div>
            <StatusBar />
          </div>
        </div>
      </div>
    </div>
  );
}
